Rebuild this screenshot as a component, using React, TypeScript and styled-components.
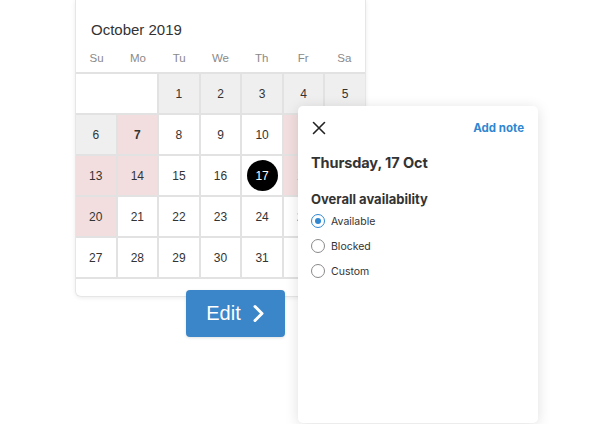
import styled, { createGlobalStyle } from 'styled-components';

type CellKind = 'white' | 'gray' | 'pink';

type Day = {
  label?: string;
  kind: CellKind;
  bold?: boolean;
  selected?: boolean;
  span?: number;
};

const WEEKDAYS = ['Su', 'Mo', 'Tu', 'We', 'Th', 'Fr', 'Sa'];

// Saturday cells 12/19/26 sit fully under the day panel, so they carry no label
const DAYS: Day[] = [
  { kind: 'white', span: 2 },
  { label: '1', kind: 'gray' },
  { label: '2', kind: 'gray' },
  { label: '3', kind: 'gray' },
  { label: '4', kind: 'gray' },
  { label: '5', kind: 'gray' },
  { label: '6', kind: 'gray' },
  { label: '7', kind: 'pink', bold: true },
  { label: '8', kind: 'white' },
  { label: '9', kind: 'white' },
  { label: '10', kind: 'white' },
  { label: '11', kind: 'pink' },
  { kind: 'pink' },
  { label: '13', kind: 'pink' },
  { label: '14', kind: 'pink' },
  { label: '15', kind: 'white' },
  { label: '16', kind: 'white' },
  { label: '17', kind: 'white', selected: true },
  { label: '18', kind: 'pink' },
  { kind: 'pink' },
  { label: '20', kind: 'pink' },
  { label: '21', kind: 'white' },
  { label: '22', kind: 'white' },
  { label: '23', kind: 'white' },
  { label: '24', kind: 'white' },
  { label: '25', kind: 'white' },
  { kind: 'white' },
  { label: '27', kind: 'white' },
  { label: '28', kind: 'white' },
  { label: '29', kind: 'white' },
  { label: '30', kind: 'white' },
  { label: '31', kind: 'white' },
  { kind: 'white' },
  { kind: 'white' },
];

const OPTIONS = ['Available', 'Blocked', 'Custom'];

const CELL_BG: Record<CellKind, string> = {
  white: '#ffffff',
  gray: '#efefef',
  pink: '#f2dede',
};

const GlobalStyle = createGlobalStyle`
  html, body {
    margin: 0;
    padding: 0;
    background: #ffffff;
  }
  body {
    font-family: "Liberation Sans", Arial, sans-serif;
  }
`;

const Stage = styled.div`
  position: relative;
  width: 605px;
  height: 424px;
  overflow: hidden;
`;

const CalendarCard = styled.div`
  margin-left: 75px;
  width: 291px;
  height: 297px;
  box-sizing: border-box;
  background: #ffffff;
  border: 1px solid #e6e6e6;
  border-top: none;
  border-radius: 0 0 6px 6px;
  box-shadow: 0 1px 4px rgba(0, 0, 0, 0.08);
  display: flex;
  flex-direction: column;
  overflow: hidden;
`;

const MonthTitle = styled.div`
  padding: 21px 0 0 15px;
  height: 17px;
  font-size: 15px;
  color: #333333;
`;

const WeekdayRow = styled.div`
  display: grid;
  grid-template-columns: repeat(7, 1fr);
  margin-top: 14px;
  height: 20px;
`;

const Weekday = styled.div`
  text-align: center;
  font-size: 11.5px;
  color: #8a8a8a;
`;

const DayGrid = styled.div`
  display: grid;
  grid-template-columns: repeat(7, 1fr);
  grid-auto-rows: 39px;
  gap: 2px;
  padding: 2px 0;
  background: #e2e2e2;
`;

const Cell = styled.div<{ $kind: CellKind; $bold?: boolean; $span?: number }>`
  grid-column: span ${(p) => p.$span ?? 1};
  background: ${(p) => CELL_BG[p.$kind]};
  display: flex;
  align-items: center;
  justify-content: center;
  font-size: 12px;
  color: #333333;
  font-weight: ${(p) => (p.$bold ? 700 : 400)};
`;

const SelectedDot = styled.span`
  width: 31px;
  height: 31px;
  border-radius: 50%;
  background: #000000;
  color: #ffffff;
  display: flex;
  align-items: center;
  justify-content: center;
`;

const EditButton = styled.button`
  position: absolute;
  left: 186px;
  top: 290px;
  width: 99px;
  height: 47px;
  border: none;
  border-radius: 4px;
  background: #3a86c9;
  color: #ffffff;
  font-family: "Liberation Sans", Arial, sans-serif;
  font-size: 20px;
  display: flex;
  align-items: center;
  justify-content: center;
  gap: 11px;
  padding: 0;
  box-shadow: 0 1px 3px rgba(0, 0, 0, 0.12);
`;

const Panel = styled.div`
  position: absolute;
  left: 298px;
  top: 106px;
  width: 240px;
  height: 317px;
  box-sizing: border-box;
  background: #ffffff;
  border-radius: 5px;
  box-shadow: 0 2px 14px rgba(0, 0, 0, 0.13);
  padding: 14px 14px 0 13px;
  font-family: Inter, "Liberation Sans", sans-serif;
  color: #333333;
`;

const PanelTop = styled.div`
  display: flex;
  align-items: center;
  justify-content: space-between;
  height: 16px;
`;

const CloseIcon = styled.svg`
  width: 14px;
  height: 14px;
  margin-left: 1px;
`;

const AddNote = styled.span`
  font-size: 11.5px;
  font-weight: 700;
  color: #2f87d1;
`;

const DateTitle = styled.h2`
  margin: 18px 0 0;
  font-size: 14.5px;
  font-weight: 700;
  color: #333333;
  letter-spacing: -0.1px;
`;

const SectionTitle = styled.h3`
  margin: 20px 0 7px;
  font-size: 13px;
  font-weight: 700;
  color: #333333;
`;

const OptionList = styled.div`
  display: flex;
  flex-direction: column;
  gap: 11px;
`;

const Option = styled.label`
  display: flex;
  align-items: center;
  gap: 6px;
  font-size: 10.5px;
  color: #333333;
`;

const Radio = styled.span<{ $checked?: boolean }>`
  box-sizing: border-box;
  width: 14px;
  height: 14px;
  border-radius: 50%;
  border: 1px solid ${(p) => (p.$checked ? '#2f87d1' : '#8a8a8a')};
  display: flex;
  align-items: center;
  justify-content: center;
  &::after {
    content: '';
    width: 6px;
    height: 6px;
    border-radius: 50%;
    background: ${(p) => (p.$checked ? '#2f87d1' : 'transparent')};
  }
`;

const App = () => {
  return (
    <>
      <GlobalStyle />
      <Stage>
        <CalendarCard>
          <MonthTitle>October 2019</MonthTitle>
          <WeekdayRow>
            {WEEKDAYS.map((d) => (
              <Weekday key={d}>{d}</Weekday>
            ))}
          </WeekdayRow>
          <DayGrid>
            {DAYS.map((day, i) => (
              <Cell key={i} $kind={day.kind} $bold={day.bold} $span={day.span}>
                {day.selected ? <SelectedDot>{day.label}</SelectedDot> : day.label}
              </Cell>
            ))}
          </DayGrid>
        </CalendarCard>

        <EditButton>
          Edit
          <svg width="13" height="19" viewBox="0 0 13 19">
            <path d="M3 2.5 L10 9.5 L3 16.5" fill="none" stroke="#ffffff" strokeWidth="3" strokeLinecap="round" strokeLinejoin="round" />
          </svg>
        </EditButton>

        <Panel>
          <PanelTop>
            <CloseIcon viewBox="0 0 14 14">
              <path d="M1.5 1.5 L12.5 12.5 M12.5 1.5 L1.5 12.5" stroke="#222222" strokeWidth="1.6" strokeLinecap="round" />
            </CloseIcon>
            <AddNote>Add note</AddNote>
          </PanelTop>
          <DateTitle>Thursday, 17 Oct</DateTitle>
          <SectionTitle>Overall availability</SectionTitle>
          <OptionList>
            {OPTIONS.map((o, i) => (
              <Option key={o}>
                <Radio $checked={i === 0} />
                {o}
              </Option>
            ))}
          </OptionList>
        </Panel>
      </Stage>
    </>
  );
};

export default App;
